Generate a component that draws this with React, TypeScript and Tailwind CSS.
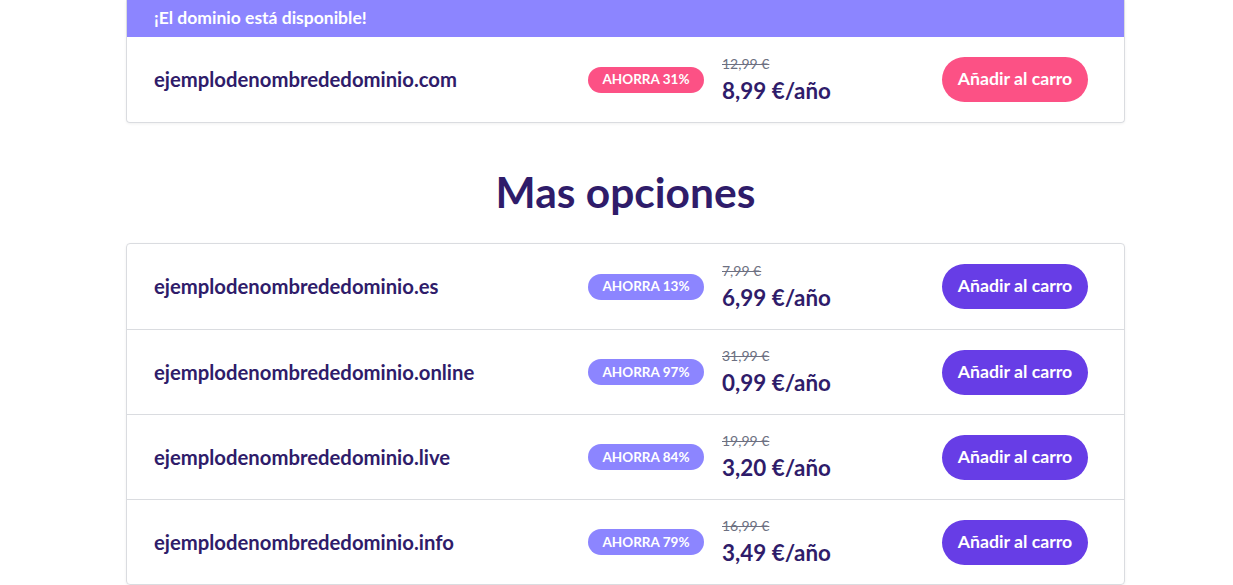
import React from "react";

type Domain = {
  name: string;
  save: number;
  oldPrice: string;
  price: string;
};

const featured: Domain = {
  name: "ejemplodenombrededominio.com",
  save: 31,
  oldPrice: "12,99 €",
  price: "8,99 €/año",
};

const options: Domain[] = [
  { name: "ejemplodenombrededominio.es", save: 13, oldPrice: "7,99 €", price: "6,99 €/año" },
  { name: "ejemplodenombrededominio.online", save: 97, oldPrice: "31,99 €", price: "0,99 €/año" },
  { name: "ejemplodenombrededominio.live", save: 84, oldPrice: "19,99 €", price: "3,20 €/año" },
  { name: "ejemplodenombrededominio.info", save: 79, oldPrice: "16,99 €", price: "3,49 €/año" },
];

function DomainRow({ d, highlight, divider }: { d: Domain; highlight?: boolean; divider?: boolean }) {
  return (
    <div
      className={`flex items-center h-[85px] pl-[27px] pr-[36px] ${divider ? "border-t border-[#dadce0]" : ""}`}
    >
      <div className="flex-1 text-[20.3px] font-bold text-[#2f1c6a]">{d.name}</div>
      <div className="w-[134px] flex">
        <span
          className={`inline-flex items-center justify-center h-[26px] w-[116px] rounded-full text-[13.5px] font-bold text-white ${
            highlight ? "bg-[#fc5185]" : "bg-[#8c85ff]"
          }`}
        >
          AHORRA {d.save}%
        </span>
      </div>
      <div className="w-[220px] flex flex-col">
        <span className="text-[14px] leading-[20px] text-[#6d7081] line-through">{d.oldPrice}</span>
        <span className="text-[22.4px] leading-[30px] mt-[2px] font-bold text-[#2f1c6a]">{d.price}</span>
      </div>
      <button
        className={`h-[45px] w-[146px] rounded-full text-[17.7px] font-bold text-white ${
          highlight ? "bg-[#fc5185]" : "bg-[#673de6]"
        }`}
      >
        Añadir al carro
      </button>
    </div>
  );
}

export default function App() {
  return (
    <div
      className="min-h-screen bg-white"
      style={{ fontFamily: "Lato, 'Noto Sans', sans-serif" }}
    >
      <div className="w-[999px] ml-[126px]">
        {/* available domain card */}
        <div className="rounded-b-[4px] border border-t-0 border-[#dadce0] shadow-[0_1px_3px_rgba(0,0,0,0.06)] overflow-hidden">
          <div className="h-[37px] bg-[#8c85ff] flex items-center pl-[27px] text-[17.5px] font-bold text-white">
            ¡El dominio está disponible!
          </div>
          <DomainRow d={featured} highlight />
        </div>

        <h2 className="text-center text-[42.5px] font-bold text-[#2f1c6a] leading-[48px] mt-[45px] mb-[27px]">
          Mas opciones
        </h2>

        <div className="rounded-[4px] border border-[#dadce0] shadow-[0_1px_3px_rgba(0,0,0,0.06)]">
          {options.map((d, i) => (
            <DomainRow key={d.name} d={d} divider={i > 0} />
          ))}
        </div>
      </div>
    </div>
  );
}
